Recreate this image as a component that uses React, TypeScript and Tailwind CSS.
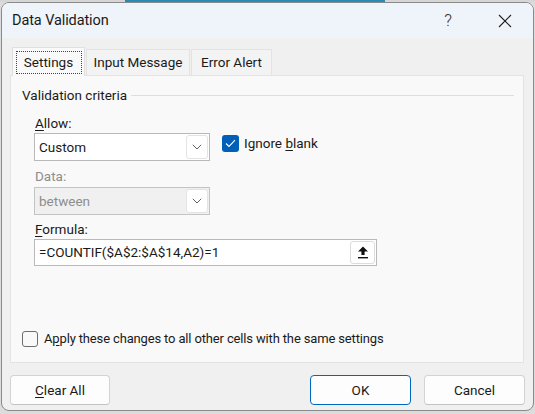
import React from "react";

const font = { fontFamily: 'Roboto, "Noto Sans", sans-serif' };

function Chevron({ color = "#606060" }: { color?: string }) {
  return (
    <svg width="10" height="6" viewBox="0 0 10 6" fill="none">
      <path d="M0.8 0.8 L5 5 L9.2 0.8" stroke={color} strokeWidth="1" />
    </svg>
  );
}

function Combo({ value, disabled }: { value: string; disabled?: boolean }) {
  return (
    <div
      className={`flex h-[28px] w-[176px] items-center justify-between border ${
        disabled ? "border-[#c4c4c4] bg-[#f0f0f0] text-[#8d8d8d]" : "border-[#b9b9b9] bg-white text-[#1a1a1a]"
      }`}
    >
      <span className="pl-[4px] text-[13.5px]">{value}</span>
      <div className="mr-[1px] flex h-[24px] w-[22px] items-center justify-center rounded-[3px] border border-[#e3e3e3] bg-white">
        <Chevron />
      </div>
    </div>
  );
}

export default function App() {
  return (
    <div className="relative h-[414px] w-[535px] overflow-hidden bg-[#dcdcdc]" style={font}>
      <div className="flex h-[2px] w-full">
        <div className="w-[125px] bg-[#d6d6d6]" />
        <div className="w-[260px] bg-[#2a89b5]" />
        <div className="flex-1 bg-[#d6d6d6]" />
      </div>
      <div className="ml-[1px] flex h-[409px] w-[533px] flex-col overflow-hidden rounded-[8px] border border-[#8a8a8a] bg-[#f0f0f0] text-[#1a1a1a]">
        {/* Title bar */}
        <div className="flex h-[35px] items-center bg-[#eef4f9]">
          <span className="ml-[10px] text-[14.5px] tracking-[-0.1px] text-[#1a1a1a]">Data Validation</span>
          <span className="ml-auto mr-[46px] text-[17px] font-light text-[#333]">?</span>
          <svg className="mr-[21px]" width="14" height="14" viewBox="0 0 14 14">
            <path d="M1 1 L13 13 M13 1 L1 13" stroke="#222" strokeWidth="1.1" />
          </svg>
        </div>

        {/* Tabs */}
        <div className="mt-[9px] flex items-end pl-[10px]">
          <div className="relative z-10 -mb-[1px] flex h-[29px] w-[73px] items-center justify-center border border-b-0 border-[#e0e0e0] bg-[#f9f9f9]">
            <span className="flex h-[23px] w-[66px] items-center justify-center border border-dotted border-[#444] text-[13.5px]">
              Settings
            </span>
          </div>
          <div className="ml-[1px] flex h-[26px] w-[104px] items-center justify-center border border-b-0 border-[#e3e3e3] bg-[#f3f3f3] text-[13.5px]">
            Input Message
          </div>
          <div className="ml-[1px] flex h-[26px] w-[81px] items-center justify-center border border-b-0 border-[#e3e3e3] bg-[#f3f3f3] text-[13.5px]">
            Error Alert
          </div>
        </div>

        {/* Panel */}
        <div className="ml-[8px] flex h-[288px] w-[514px] flex-col border border-[#e3e3e3] bg-[#f9f9f9]">
          <div className="mt-[9px] flex h-[20px] items-center pl-[11px]">
            <span className="text-[13.5px] leading-[20px]">Validation criteria</span>
            <div className="ml-[4px] mr-[9px] h-[1px] flex-1 bg-[#dedede]" />
          </div>

          <div className="ml-[23px] mt-[8px] flex flex-col">
            <span className="ml-[1px] h-[20px] text-[13.5px] leading-[20px]">
              <span className="underline underline-offset-2">A</span>llow:
            </span>
            <div className="flex items-start">
              <Combo value="Custom" />
              <div className="ml-[12px] mt-[2px] flex h-[17px] items-center">
                <div className="flex h-[17px] w-[17px] items-center justify-center rounded-[3px] bg-[#005fb8]">
                  <svg width="11" height="9" viewBox="0 0 11 9" fill="none">
                    <path d="M1 4.5 L4 7.5 L10 1.2" stroke="white" strokeWidth="1.1" />
                  </svg>
                </div>
                <span className="ml-[5px] text-[13.5px] leading-[17px]">
                  Ignore <span className="underline underline-offset-2">b</span>lank
                </span>
              </div>
            </div>

            <span className="ml-[1px] mt-[5px] h-[20px] text-[13.5px] leading-[20px] text-[#8d8d8d]">Data:</span>
            <div className="mt-[1px]">
              <Combo value="between" disabled />
            </div>

            <span className="ml-[1px] mt-[4px] h-[20px] text-[13.5px] leading-[20px]">
              <span className="underline underline-offset-2">F</span>ormula:
            </span>
            <div className="flex h-[27px] w-[343px] items-center justify-between border border-[#b9b9b9] bg-white">
              <span className="pl-[4px] text-[13.5px]">=COUNTIF($A$2:$A$14,A2)=1</span>
              <div className="mr-[1px] flex h-[23px] w-[25px] items-center justify-center rounded-[3px] border border-[#dcdcdc] bg-white">
                <svg width="12" height="13" viewBox="0 0 12 13">
                  <path d="M6 0.5 L11 5.5 L7.6 5.5 L7.6 9 L4.4 9 L4.4 5.5 L1 5.5 Z" fill="#111" />
                  <rect x="1" y="11" width="10" height="1.4" fill="#111" />
                </svg>
              </div>
            </div>
          </div>

          <div className="ml-[11px] mt-auto mb-[15px] flex h-[16px] items-center">
            <div className="h-[16px] w-[16px] rounded-[3px] border border-[#6e6e6e] bg-[#f9f9f9]" />
            <span className="ml-[6px] text-[13px] leading-[16px] tracking-[-0.15px]">
              A<span className="underline underline-offset-2">p</span>ply these changes to all other cells with the same settings
            </span>
          </div>
        </div>

        {/* Buttons */}
        <div className="ml-[8px] mt-[12px] flex w-[515px] items-center">
          <button className="h-[30px] w-[100px] rounded-[4px] border border-[#d3d3d3] border-b-[#c2c2c2] bg-[#fdfdfd] text-[13.5px] text-[#1a1a1a]">
            <span className="underline underline-offset-2">C</span>lear All
          </button>
          <button className="ml-auto h-[30px] w-[101px] rounded-[4px] border border-[#0067c0] bg-[#fdfdfd] text-[13.5px] text-[#1a1a1a]">
            OK
          </button>
          <button className="ml-[13px] h-[30px] w-[101px] rounded-[4px] border border-[#d3d3d3] border-b-[#c2c2c2] bg-[#fdfdfd] text-[13.5px] text-[#1a1a1a]">
            Cancel
          </button>
        </div>
      </div>
    </div>
  );
}
